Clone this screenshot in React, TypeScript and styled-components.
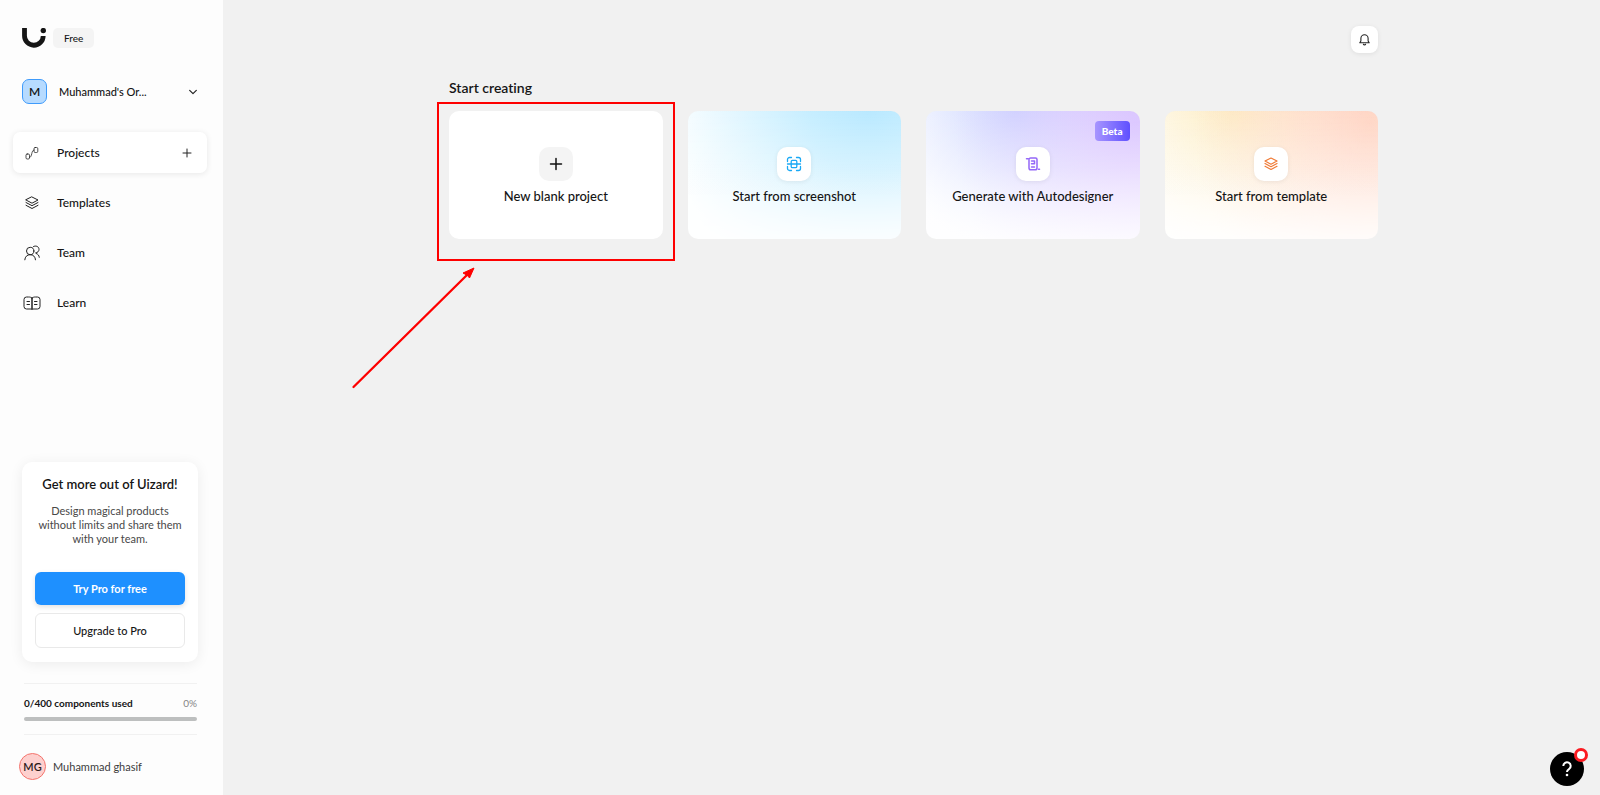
import React from 'react';
import styled, { createGlobalStyle } from 'styled-components';

const GlobalStyle = createGlobalStyle`
  *, *::before, *::after { box-sizing: border-box; }
  body {
    margin: 0;
    background: #f1f1f1;
    color: #151515;
    font-family: Lato, 'Liberation Sans', sans-serif;
    font-size: 12px;
    line-height: 16px;
    font-variant-ligatures: none;
  }
  button { font: inherit; color: inherit; border: 0; background: none; padding: 0; cursor: pointer; }
  a { color: inherit; text-decoration: none; }
  h2, p { margin: 0; }
  svg { display: block; flex: none; }
`;

const Page = styled.div`
  display: flex;
  min-height: 100vh;
`;

const Sidebar = styled.aside`
  flex: none;
  width: 223px;
  padding: 28px 16px 15px 13px;
  display: flex;
  flex-direction: column;
  background: #fdfdfd;
`;

const Brand = styled.div`
  display: flex;
  align-items: center;
  gap: 7px;
  padding-left: 9px;
`;

const PlanTag = styled.span`
  padding: 2px 11px;
  border-radius: 5px;
  background: #f4f4f4;
  font-size: 10px;
  font-weight: 500;
`;

const OrgButton = styled.button`
  display: flex;
  align-items: center;
  margin: 31px 8px 28px 9px;
  text-align: left;
  font-weight: 500;
`;

const OrgAvatar = styled.span`
  width: 25px;
  height: 25px;
  margin-right: 12px;
  border: 1px solid #3f9bfb;
  border-radius: 7px;
  background: #b7dbff;
  font-weight: 600;
  line-height: 23px;
  text-align: center;
`;

const OrgName = styled.span`
  flex: 1;
  font-size: 11px;
`;

const Nav = styled.nav`
  display: flex;
  flex-direction: column;
  gap: 9px;
`;

const NavItem = styled.div<{ $active?: boolean }>`
  display: flex;
  align-items: center;
  height: 41px;
  padding: 0 14px 0 10px;
  border-radius: 7px;
  background: ${(p) => (p.$active ? '#fff' : 'transparent')};
  box-shadow: ${(p) => (p.$active ? '0 1px 6px rgba(0, 0, 0, 0.09)' : 'none')};
`;

const NavLink = styled.a`
  flex: 1;
  display: flex;
  align-items: center;
  gap: 16px;
  font-weight: 500;
`;

const Promo = styled.section`
  margin: auto 9px 21px 9px;
  padding: 14px 13px;
  border-radius: 10px;
  background: #fff;
  box-shadow: 0 2px 14px rgba(0, 0, 0, 0.07);
  text-align: center;
`;

const PromoTitle = styled.h2`
  font-size: 13px;
  line-height: 16px;
  font-weight: 600;
  white-space: nowrap;
`;

const PromoText = styled.p`
  margin: 12px 0 26px;
  color: #484848;
  font-size: 11px;
  line-height: 14px;
`;

const PromoButton = styled.button<{ $primary?: boolean }>`
  display: block;
  width: 100%;
  height: ${(p) => (p.$primary ? '33px' : '35px')};
  border: ${(p) => (p.$primary ? '0' : '1px solid #e9e9e9')};
  border-radius: 6px;
  background: ${(p) => (p.$primary ? '#1e90ff' : '#fff')};
  color: ${(p) => (p.$primary ? '#fff' : '#151515')};
  font-size: 11px;
  font-weight: ${(p) => (p.$primary ? 700 : 500)};
  box-shadow: ${(p) => (p.$primary ? '0 2px 5px rgba(0, 0, 0, 0.12)' : 'none')};

  & + & { margin-top: 8px; }
`;

const Usage = styled.section`
  margin: 0 10px 0 11px;
  padding: 11px 0 13px;
  border: solid #f1f1f1;
  border-width: 1px 0;
`;

const UsageLabels = styled.div`
  display: flex;
  justify-content: space-between;
  font-size: 10px;
  font-weight: 700;
`;

const UsagePercent = styled.span`
  color: #858585;
  font-weight: 400;
`;

const UsageTrack = styled.div`
  height: 4px;
  margin-top: 6px;
  border-radius: 2px;
  background: #bdbfbf;
`;

const Account = styled.button`
  display: flex;
  align-items: center;
  gap: 7px;
  margin: 18px 0 0 6px;
  color: #3c3c3c;
  font-size: 11px;
`;

const UserAvatar = styled.span`
  width: 27px;
  height: 27px;
  border: 1px solid #f4736c;
  border-radius: 50%;
  background: #fdd0ce;
  color: #2b1918;
  font-weight: 600;
  line-height: 25px;
`;

const Main = styled.main`
  flex: 1;
  min-width: 0;
  padding: 26px 24px 24px 28px;
`;

const Content = styled.div`
  max-width: 929px;
  margin: 0 auto;
`;

const TopBar = styled.header`
  display: flex;
  justify-content: flex-end;
`;

const BellButton = styled.button`
  display: grid;
  place-items: center;
  width: 27px;
  height: 27px;
  border-radius: 8px;
  background: #fff;
  box-shadow: 0 1px 5px rgba(0, 0, 0, 0.08);
`;

const Heading = styled.h2`
  margin: 25px 0 13px;
  font-size: 14px;
  line-height: 20px;
  font-weight: 600;
`;

const Cards = styled.div`
  display: grid;
  grid-template-columns: repeat(4, 1fr);
  gap: 25px;
`;

const CardSlot = styled.div`
  position: relative;
`;

const Card = styled.button<{ $bg: string }>`
  display: flex;
  flex-direction: column;
  align-items: center;
  width: 100%;
  height: 128px;
  padding-top: 36px;
  gap: 7px;
  border-radius: 10px;
  background: ${(p) => p.$bg};
  font-size: 13px;
  font-weight: 500;
`;

const CardIcon = styled.span<{ $flat?: boolean }>`
  display: grid;
  place-items: center;
  width: 34px;
  height: 34px;
  border-radius: 10px;
  background: ${(p) => (p.$flat ? '#f4f4f4' : '#fff')};
  box-shadow: ${(p) => (p.$flat ? 'none' : '0 1px 5px rgba(0, 0, 0, 0.07)')};
`;

const BetaTag = styled.span`
  position: absolute;
  top: 10px;
  right: 10px;
  padding: 2px 7px;
  border-radius: 4px;
  background: linear-gradient(90deg, #a795ff, #5f50ff);
  color: #fff;
  font-size: 10px;
  font-weight: 900;
`;

const Highlight = styled.div`
  position: absolute;
  inset: -9px -12px -22px -12px;
  border: 2px solid #fe0000;
  pointer-events: none;
`;

const Arrow = styled.svg`
  position: absolute;
  top: 155px;
  left: -98px;
  pointer-events: none;
`;

const HelpButton = styled.button`
  position: fixed;
  right: 16px;
  bottom: 9px;
  width: 34px;
  height: 34px;
  border-radius: 50%;
  background: #000;
  display: grid;
  place-items: center;
`;

const HelpDot = styled.span`
  position: absolute;
  top: -4px;
  right: -4px;
  width: 14px;
  height: 14px;
  border: 3px solid #fb1a20;
  border-radius: 50%;
  background: #fff;
`;

type IconProps = { size?: number; color?: string; children: React.ReactNode; width?: number };

const Icon = ({ size = 18, color = '#222', width = 1, children }: IconProps) => (
  <svg width={size} height={size} viewBox="0 0 18 18" fill="none" stroke={color}
    strokeWidth={width} strokeLinecap="round" strokeLinejoin="round" aria-hidden="true">
    {children}
  </svg>
);

const Logo = () => (
  <svg width="24" height="20" viewBox="0 0 24 20" role="img" aria-label="Uizard">
    <path d="M2.5 0v7.8a9.2 9.2 0 0 0 18.7 .2" fill="none" stroke="#151515" strokeWidth="4.8" />
    <circle cx="21.3" cy="2.6" r="2.7" fill="#151515" />
  </svg>
);

const Layers = () => (
  <>
    <path d="M9 3 15 6 9 9.200 3 6z" />
    <path d="M3 8.500l6 3.200 6-3.200M3 11.300l6 3.200 6-3.200" />
  </>
);

const navIcons = {
  projects: (
    <>
      <rect x="3" y="10" width="3.500" height="5" rx="1.200" />
      <rect x="11" y="3.500" width="3.800" height="5" rx="1.200" />
      <path d="M6.500 13.500C9.500 13.500 8 6 11 6" />
    </>
  ),
  templates: <Layers />,
  team: (
    <>
      <circle cx="7.200" cy="7" r="3.700" />
      <path d="M1.800 15.800c.2-3.200 2.400-5.100 5.400-5.100s5.100 1.900 5.300 5.100M10.500 2.500c2.300-1.300 5.500 0 5.500 2.900 0 1.900-1.300 3.200-3.300 3.500M13.300 9.500c1.700.6 2.800 1.900 3 3.800" />
    </>
  ),
  learn: (
    <>
      <path d="M9 4C8.300 3.300 7 3 5.500 3H3.500A2.500 2.500 0 0 0 1 5.500v7A2.500 2.500 0 0 0 3.500 15H7c1 0 1.700 0 2 .4.3-.4 1-.4 2-.4h3.500a2.500 2.500 0 0 0 2.500-2.500v-7A2.500 2.500 0 0 0 14.500 3h-2C11 3 9.700 3.300 9 4z" />
      <path d="M9 4v11" strokeWidth="1.500" />
      <path d="M4 7.500h2.500M4 10.500h2.500M11.500 7.500H14M11.500 10.500H14" />
    </>
  ),
};

const nav = [
  { key: 'projects', label: 'Projects' },
  { key: 'templates', label: 'Templates' },
  { key: 'team', label: 'Team' },
  { key: 'learn', label: 'Learn' },
] as const;

const fade = 'linear-gradient(180deg, rgba(255,255,255,0) 0%, rgba(255,255,255,0.3) 45%, rgba(255,255,255,0.85) 100%)';

const cards = [
  {
    label: 'New blank project',
    bg: '#fff',
    icon: <Icon color="#111" width={1.5}><path d="M9 3.500v11M3.500 9h11" /></Icon>,
  },
  {
    label: 'Start from screenshot',
    bg: `${fade}, radial-gradient(ellipse 92% 170% at 85% 0%, #b9e9ff 0%, #c6eeff 30%, #fafeff 100%)`,
    icon: (
      <Icon color="#1aa9f5" width={1.3}>
        <path d="M2.500 6.500v-2a2 2 0 0 1 2-2h2M11.500 2.500h2a2 2 0 0 1 2 2v2M15.500 11.500v2a2 2 0 0 1-2 2h-2M6.500 15.500h-2a2 2 0 0 1-2-2v-2M2.500 9h13" />
        <rect x="6.200" y="5.300" width="5.600" height="7.400" rx="1.200" />
      </Icon>
    ),
  },
  {
    label: 'Generate with Autodesigner',
    bg: `${fade}, radial-gradient(ellipse 85% 170% at 98% 10%, #dac5ff 0%, rgba(220,196,255,0) 100%), radial-gradient(ellipse 60% 110% at 42% 0%, #ced8ff 0%, rgba(214,220,255,0) 100%), linear-gradient(90deg, #fbfcff, #f6f0ff)`,
    icon: (
      <Icon color="#9467f8" width={1.5}>
        <path d="M2.500 3.800H4M5 5v8a1.800 1.800 0 0 0 1.800 1.800h4.400A1.800 1.800 0 0 0 13 13V4.500a1.500 1.500 0 0 0-1.500-1.500h-5A1.500 1.500 0 0 0 5 4.500M14.500 14.200h1M7.500 6h3M7.500 8.800h3M10.500 6v2.800M7.500 12h3" />
      </Icon>
    ),
    beta: true,
  },
  {
    label: 'Start from template',
    bg: `${fade}, radial-gradient(ellipse 82% 160% at 96% 10%, #ffd5c4 0%, rgba(255,213,196,0) 100%), radial-gradient(ellipse 60% 110% at 32% 0%, #fdeec6 0%, rgba(255,240,205,0) 100%), linear-gradient(90deg, #fffdf7, #fff5ee)`,
    icon: <Icon color="#f07a35" width={1.2}><Layers /></Icon>,
  },
];

export default function App() {
  return (
    <>
      <GlobalStyle />
      <Page>
        <Sidebar>
          <Brand>
            <Logo />
            <PlanTag>Free</PlanTag>
          </Brand>
          <OrgButton>
            <OrgAvatar>M</OrgAvatar>
            <OrgName>Muhammad's Or...</OrgName>
            <Icon size={12} width={1.8}><path d="M4 6.500l5 5 5-5" /></Icon>
          </OrgButton>
          <Nav>
            {nav.map((item) => (
              <NavItem key={item.key} $active={item.key === 'projects'}>
                <NavLink href={`#${item.key}`}>
                  <Icon width={item.key === 'projects' ? 0.8 : 1}>{navIcons[item.key]}</Icon>
                  {item.label}
                </NavLink>
                {item.key === 'projects' && (
                  <button aria-label="Add project">
                    <Icon size={12} width={1.5}><path d="M9 3v12M3 9h12" /></Icon>
                  </button>
                )}
              </NavItem>
            ))}
          </Nav>
          <Promo>
            <PromoTitle>Get more out of Uizard!</PromoTitle>
            <PromoText>Design magical products<br />without limits and share them<br />with your team.</PromoText>
            <PromoButton $primary>Try Pro for free</PromoButton>
            <PromoButton>Upgrade to Pro</PromoButton>
          </Promo>
          <Usage>
            <UsageLabels>
              <span>0/400 components used</span>
              <UsagePercent>0%</UsagePercent>
            </UsageLabels>
            <UsageTrack />
          </Usage>
          <Account>
            <UserAvatar>MG</UserAvatar>
            Muhammad ghasif
          </Account>
        </Sidebar>
        <Main>
          <Content>
            <TopBar>
              <BellButton aria-label="Notifications">
                <Icon size={13} width={1.5}>
                  <path d="M2.500 13.500h13l-1.500-2.500V7.500a5 5 0 0 0-10 0V11zM7.500 15.500c.5 1.300 2.500 1.300 3 0" />
                </Icon>
              </BellButton>
            </TopBar>
            <Heading>Start creating</Heading>
            <Cards>
              {cards.map((card, index) => (
                <CardSlot key={card.label}>
                  <Card $bg={card.bg}>
                    <CardIcon $flat={index === 0}>{card.icon}</CardIcon>
                    {card.label}
                  </Card>
                  {card.beta && <BetaTag>Beta</BetaTag>}
                  {index === 0 && (
                    <>
                      <Highlight />
                      <Arrow width="126" height="124" viewBox="0 0 126 124" aria-hidden="true">
                        <path d="M2.500 121 118 7" stroke="#fe0000" strokeWidth="2.3" strokeLinecap="round" />
                        <path d="M123 2 118.500 12 116.500 9.500 112 7z" fill="#fe0000" stroke="#fe0000" />
                      </Arrow>
                    </>
                  )}
                </CardSlot>
              ))}
            </Cards>
          </Content>
        </Main>
        <HelpButton aria-label="Help">
          <svg width="16" height="18" viewBox="0 0 16 18" fill="none" stroke="#fff" strokeWidth="2" aria-hidden="true">
            <path d="M4.300 6a3.700 3.700 0 1 1 5.800 3C8.700 9.900 8 10.300 8 12" />
            <circle cx="8" cy="15" r="1.300" fill="#fff" stroke="none" />
          </svg>
          <HelpDot />
        </HelpButton>
      </Page>
    </>
  );
}
